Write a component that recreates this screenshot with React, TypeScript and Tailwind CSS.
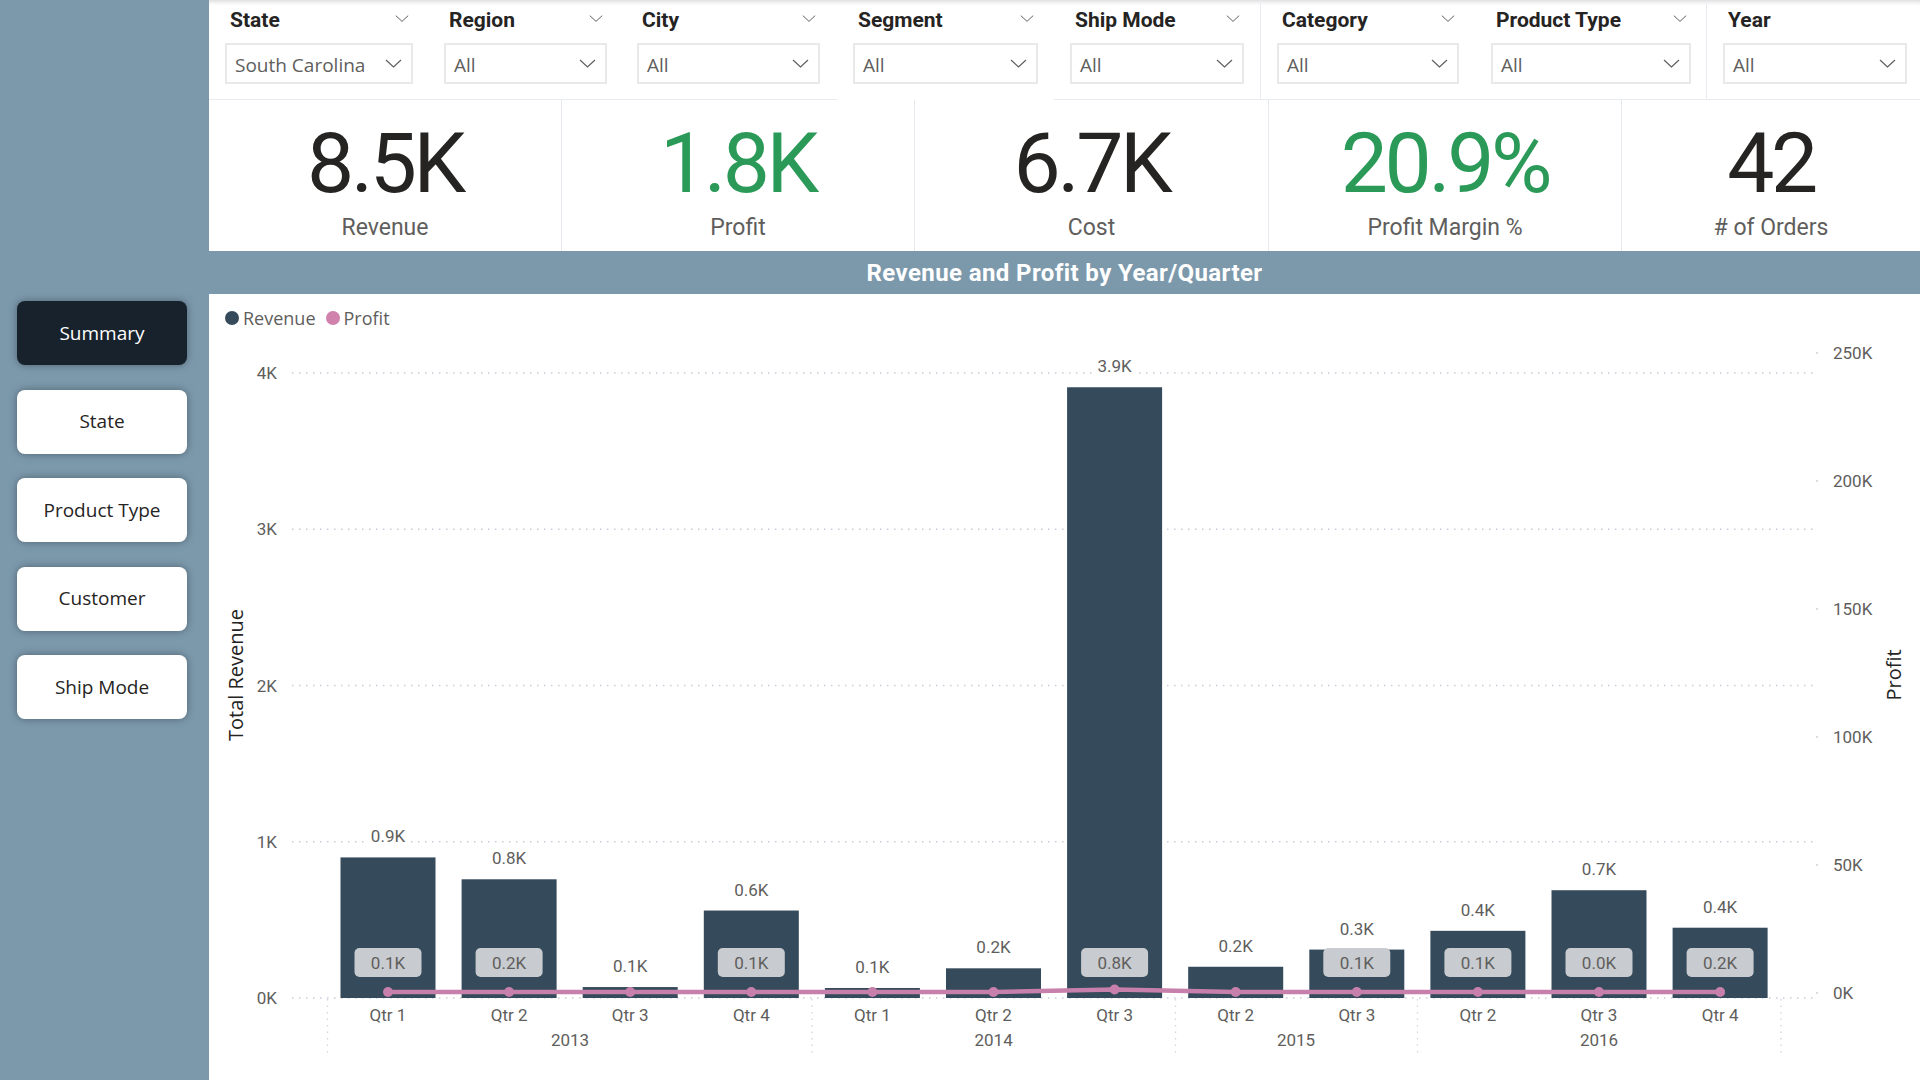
import React from 'react';

type Slicer = { label: string; value: string; wrap: string; box: string; chevron: boolean };

const slicers: Slicer[] = [
    { label: 'State', value: 'South Carolina', wrap: 'w-[219px] border-b border-[#e8ecf0]', box: 'w-[188px]', chevron: true },
    { label: 'Region', value: 'All', wrap: 'w-[193px] border-b border-[#e8ecf0]', box: 'w-[163px]', chevron: true },
    { label: 'City', value: 'All', wrap: 'w-[216px] border-b border-[#e8ecf0]', box: 'w-[183px]', chevron: true },
    { label: 'Segment', value: 'All', wrap: 'w-[217px]', box: 'w-[185px]', chevron: true },
    { label: 'Ship Mode', value: 'All', wrap: 'w-[206px] border-b border-[#e8ecf0]', box: 'w-[174px]', chevron: true },
    { label: 'Category', value: 'All', wrap: 'w-[215px] border-b border-l border-[#e8ecf0]', box: 'w-[182px]', chevron: true },
    { label: 'Product Type', value: 'All', wrap: 'w-[231px] border-b border-[#e8ecf0]', box: 'w-[200px]', chevron: true },
    { label: 'Year', value: 'All', wrap: 'flex-1 border-b border-l border-[#e8ecf0]', box: 'w-[184px]', chevron: false },
];

const kpis = [
    { value: '8.5K', label: 'Revenue', color: 'text-[#252423]', width: 'w-[353px] border-r' },
    { value: '1.8K', label: 'Profit', color: 'text-[#2b9a58]', width: 'w-[353px] border-r' },
    { value: '6.7K', label: 'Cost', color: 'text-[#252423]', width: 'w-[354px] border-r' },
    { value: '20.9%', label: 'Profit Margin %', color: 'text-[#2b9a58]', width: 'w-[353px] border-r' },
    { value: '42', label: '# of Orders', color: 'text-[#252423]', width: 'flex-1' },
];

const navItems = ['Summary', 'State', 'Product Type', 'Customer', 'Ship Mode'];

// chart geometry, in page pixels
const X0 = 388;
const STEP = 121.1;
const BASE = 998;
const PER_K = 156.2;
const BAR_W = 95;

const bars = [
    { q: 'Qtr 1', rev: 0.9, label: '0.9K', profit: '0.1K' },
    { q: 'Qtr 2', rev: 0.76, label: '0.8K', profit: '0.2K' },
    { q: 'Qtr 3', rev: 0.07, label: '0.1K', profit: null },
    { q: 'Qtr 4', rev: 0.56, label: '0.6K', profit: '0.1K' },
    { q: 'Qtr 1', rev: 0.064, label: '0.1K', profit: null },
    { q: 'Qtr 2', rev: 0.19, label: '0.2K', profit: null },
    { q: 'Qtr 3', rev: 3.91, label: '3.9K', profit: '0.8K' },
    { q: 'Qtr 2', rev: 0.2, label: '0.2K', profit: null },
    { q: 'Qtr 3', rev: 0.31, label: '0.3K', profit: '0.1K' },
    { q: 'Qtr 2', rev: 0.43, label: '0.4K', profit: '0.1K' },
    { q: 'Qtr 3', rev: 0.69, label: '0.7K', profit: '0.0K' },
    { q: 'Qtr 4', rev: 0.45, label: '0.4K', profit: '0.2K' },
];

const years = [
    { year: '2013', x: 570 },
    { year: '2014', x: 993.6 },
    { year: '2015', x: 1296 },
    { year: '2016', x: 1599 },
];

const yearEdges = [327.5, 812, 1175.5, 1417.5, 1781];
const leftTicks = ['4K', '3K', '2K', '1K', '0K'];
const rightTicks = ['250K', '200K', '150K', '100K', '50K', '0K'];

const Chevron: React.FC<{ className?: string }> = ({ className }) => (
    <svg width="17" height="9" viewBox="0 0 17 9" className={className}>
        <polyline points="1,1 8.5,8 16,1" fill="none" stroke="#605e5c" strokeWidth="1.2" />
    </svg>
);

const FilterBar: React.FC = () => (
    <div className="flex h-[100px] bg-white shadow-[inset_0_5px_4px_-3px_rgba(0,0,0,0.14)]">
        {slicers.map(s => (
            <div key={s.label} className={`${s.wrap} pl-[16px]`}>
                <div className={`${s.box} h-[43px] pt-[8px] flex items-start justify-between`}>
                    <span className="ml-[5px] font-['Roboto',sans-serif] font-bold text-[21px] leading-[25px] text-[#252423]">{s.label}</span>
                    {s.chevron && <Chevron className="mt-[6px] mr-[4px] w-[14px]" />}
                </div>
                <div className={`${s.box} h-[41px] border-2 border-[#e9e9e9] flex items-center justify-between pl-[8px] pr-[9px] pt-[3px]`}>
                    <span className="font-['Open_Sans',sans-serif] text-[19px] text-[#605e5c]">{s.value}</span>
                    <Chevron className="-mt-[3px]" />
                </div>
            </div>
        ))}
    </div>
);

const KpiRow: React.FC = () => (
    <div className="flex h-[151px] bg-white">
        {kpis.map(k => (
            <div key={k.label} className={`${k.width} border-[#e6eaef] flex flex-col items-center`}>
                <div className={`pt-[14px] font-['Roboto',sans-serif] text-[84px] leading-[100px] tracking-[-0.04em] ${k.color}`}>
                    {k.value}
                </div>
                <div className="font-['Roboto',sans-serif] text-[23px] leading-[28px] text-[#605e5c]">{k.label}</div>
            </div>
        ))}
    </div>
);

const Chart: React.FC = () => {
    const cx = (i: number) => X0 + i * STEP;
    const linePts = bars.map((_, i) => `${cx(i)},${i === 6 ? 989.5 : 992}`).join(' ');
    return (
        <svg width="1711" height="742" viewBox="209 338 1711 742" className="block">
            {/* gridlines */}
            {leftTicks.map((t, i) => (
                <line key={t} x1="292" x2="1816" y1={373 + i * 156.25} y2={373 + i * 156.25} stroke="#c9ccd9" strokeWidth="1.5" strokeDasharray="1.5 5.5" />
            ))}
            {yearEdges.map(x => (
                <line key={x} x1={x} x2={x} y1="999" y2="1056" stroke="#d2d5de" strokeWidth="1.3" strokeDasharray="1.5 5" />
            ))}
            <g fontFamily="Roboto, sans-serif" fontSize="17" fill="#605e5c">
                {leftTicks.map((t, i) => (
                    <text key={t} x="277" y={373 + i * 156.25} textAnchor="end" dominantBaseline="central">{t}</text>
                ))}
                {rightTicks.map((t, i) => (
                    <g key={t}>
                        <circle cx="1817" cy={353 + i * 128} r="0.9" fill="#c9ccd9" />
                        <text x="1833" y={353 + i * 128} dominantBaseline="central">{t}</text>
                    </g>
                ))}
            </g>

            {/* bars */}
            {bars.map((b, i) => {
                const h = b.rev * PER_K;
                const top = BASE - h;
                return (
                    <g key={i} fontFamily="Roboto, sans-serif" fontSize="17">
                        <rect x={cx(i) - BAR_W / 2} y={top} width={BAR_W} height={h} fill="#354a5a" />
                        <rect x={cx(i) - 21} y={top - 31} width="42" height="20" fill="#ffffff" />
                        <text x={cx(i)} y={top - 21} textAnchor="middle" dominantBaseline="central" fill="#605e5c">{b.label}</text>
                        {b.profit && (
                            <g>
                                <rect x={cx(i) - 33.5} y="948" width="67" height="29" rx="5" fill="#c8cbcf" />
                                <text x={cx(i)} y="963" textAnchor="middle" dominantBaseline="central" fill="#605e5c">{b.profit}</text>
                            </g>
                        )}
                        <text x={cx(i)} y="1015" textAnchor="middle" dominantBaseline="central" fill="#605e5c">{b.q}</text>
                    </g>
                );
            })}

            {/* profit line */}
            <polyline points={linePts} fill="none" stroke="#c77fab" strokeWidth="4.5" strokeLinejoin="round" />
            {bars.map((_, i) => (
                <circle key={i} cx={cx(i)} cy={i === 6 ? 989.5 : 992} r="5" fill="#c77fab" />
            ))}

            <g fontFamily="Roboto, sans-serif" fontSize="17" fill="#605e5c">
                {years.map(y => (
                    <text key={y.year} x={y.x} y="1040" textAnchor="middle" dominantBaseline="central">{y.year}</text>
                ))}
            </g>

            <g fontFamily="'Open Sans', sans-serif" fontSize="20" fill="#252423">
                <text x="235" y="675" textAnchor="middle" dominantBaseline="central" transform="rotate(-90 235 675)">Total Revenue</text>
                <text x="1893" y="675" textAnchor="middle" dominantBaseline="central" transform="rotate(-90 1893 675)">Profit</text>
            </g>
        </svg>
    );
};

const App: React.FC = () => {
    return (
        <div className="w-[1920px] h-[1080px] overflow-hidden bg-[#7c99ac] flex">
            <aside className="w-[209px] shrink-0 pt-[301px] pl-[17px] flex flex-col gap-[24.5px]">
                {navItems.map((item, i) => (
                    <button
                        key={item}
                        className={`w-[170px] h-[64px] rounded-[8px] shadow-[0_0_8px_rgba(0,0,0,0.35)] font-['Open_Sans',sans-serif] text-[19px] ${
                            i === 0 ? 'bg-[#17222c] text-white' : 'bg-white text-[#252423]'
                        }`}
                    >
                        {item}
                    </button>
                ))}
            </aside>

            <main className="flex-1 flex flex-col">
                <FilterBar />
                <KpiRow />
                <div className="h-[43px] flex items-center justify-center">
                    <h2 className="font-['Roboto',sans-serif] font-bold text-[24px] tracking-[0.4px] text-white">
                        Revenue and Profit by Year/Quarter
                    </h2>
                </div>
                <div className="flex-1 bg-white">
                    <div className="h-[44px] flex items-start pt-[14px] pl-[16px] gap-[10px] font-['Open_Sans',sans-serif] text-[18px] leading-[20px] text-[#605e5c]">
                        <div className="flex items-center gap-[4px]">
                            <span className="w-[14px] h-[14px] rounded-full bg-[#354a5a]" />
                            Revenue
                        </div>
                        <div className="flex items-center gap-[4px]">
                            <span className="w-[14px] h-[14px] rounded-full bg-[#d081ac]" />
                            Profit
                        </div>
                    </div>
                    <Chart />
                </div>
            </main>
        </div>
    );
};

export default App;
